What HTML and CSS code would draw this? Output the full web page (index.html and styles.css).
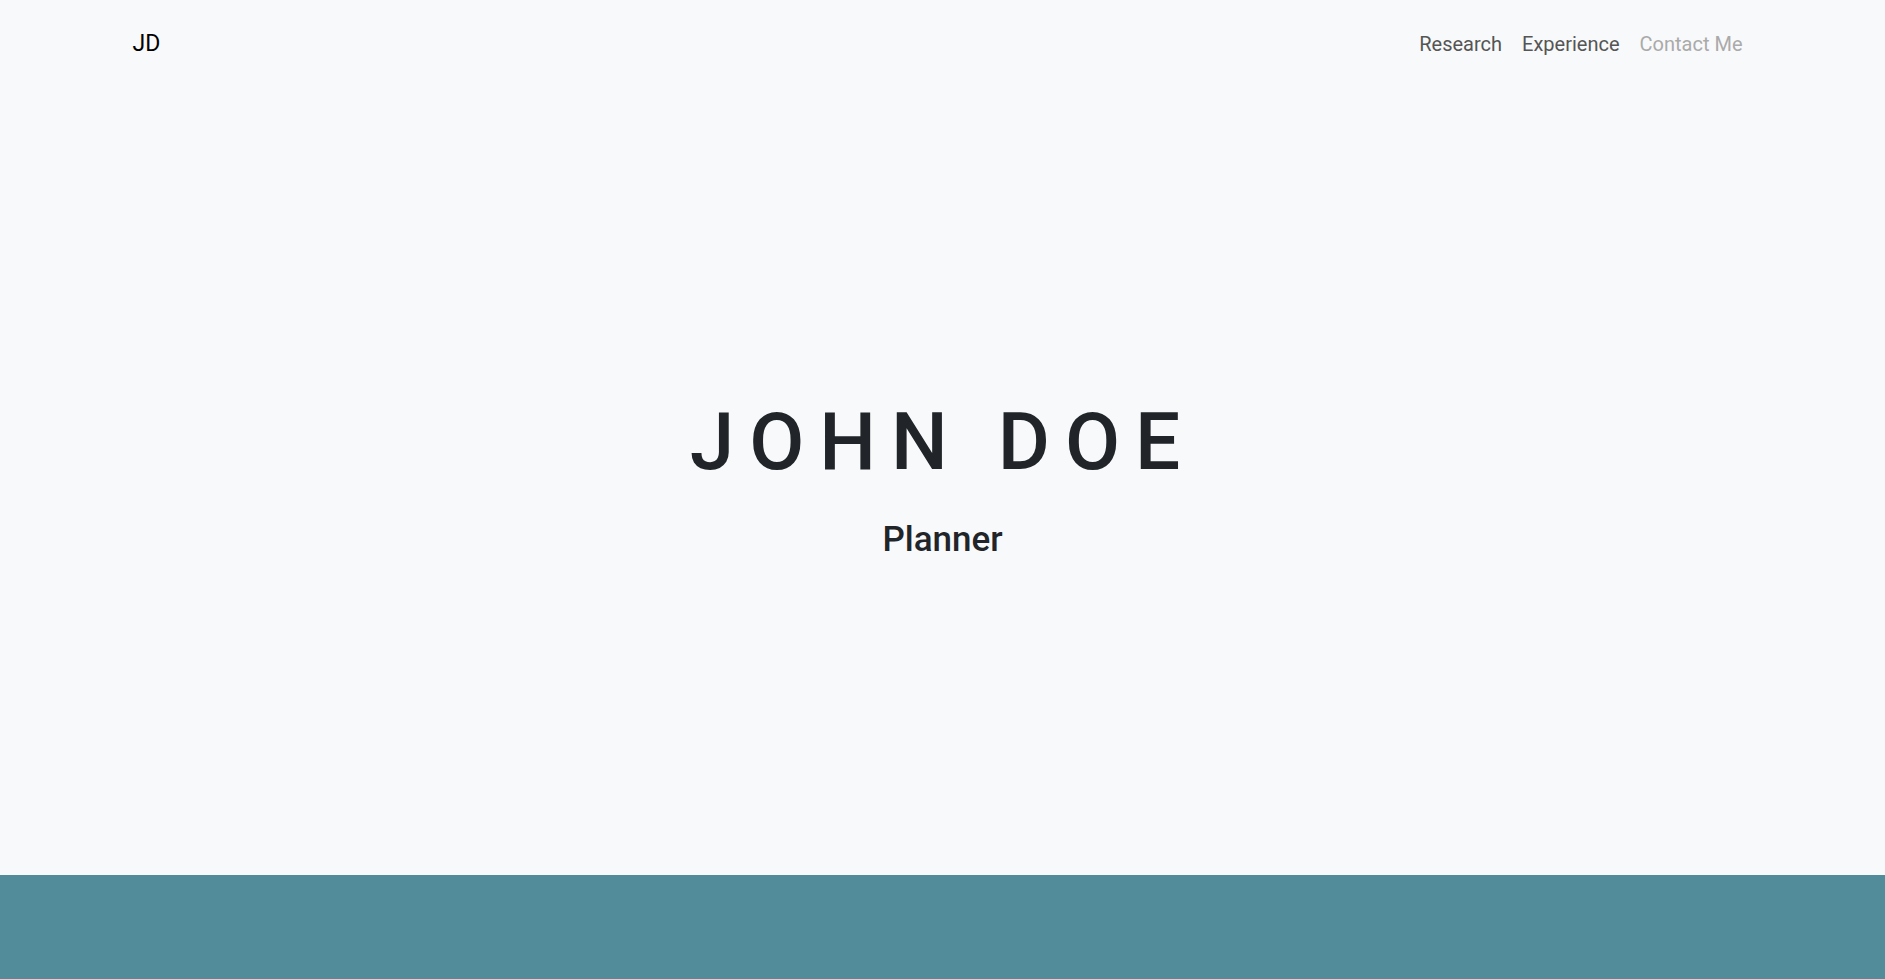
FILE: index.html
```html
<!DOCTYPE html>
<html lang="en">
<head>
  <meta charset="UTF-8">
  <meta name="viewport" content="width=device-width, initial-scale=1.0">
  <title>John Doe</title>
  <link rel="stylesheet" href="styles.css">
</head>
<body>

  <header class="navbar">
    <div class="container nav-inner">
      <a class="brand" href="#">JD</a>
      <nav class="nav-links">
        <a class="nav-link" href="#research">Research</a>
        <a class="nav-link" href="#experience">Experience</a>
        <a class="nav-link muted" href="#contact">Contact Me</a>
      </nav>
    </div>
  </header>

  <section class="hero">
    <h1 class="hero-name">JOHN DOE</h1>
    <h2 class="hero-role">Planner</h2>
  </section>

  <section class="band" id="research"></section>

</body>
</html>
```

FILE: styles.css
```css
body {
  font-family: Roboto, "Noto Sans", Arial, sans-serif;
  background-color: #f8f9fa;
  color: #212529;
  margin: 0;
  padding: 0;
}
a {
  text-decoration: none;
}
.container {
  width: 1620px;
  margin: 0 auto;
}
.navbar {
  height: 88px;
  display: flex;
  align-items: center;
}
.nav-inner {
  display: flex;
  justify-content: space-between;
  align-items: center;
}
.brand {
  font-size: 23px;
  line-height: 1.5;
  color: #000;
}
.nav-links {
  display: flex;
}
.nav-link {
  font-size: 20px;
  line-height: 1.5;
  padding: 0 10px;
  color: #555;
}
.nav-link.muted {
  color: #aaa;
}
.hero {
  height: 787px;
  box-sizing: border-box;
  padding-bottom: 8px;
  display: flex;
  flex-direction: column;
  justify-content: center;
  align-items: center;
  text-align: center;
}
.hero-name {
  margin: 0;
  font-size: 80px;
  font-weight: 500;
  line-height: 1.2;
  letter-spacing: 15px;
}
.hero-role {
  margin: 29px 0 0;
  font-size: 35px;
  font-weight: 500;
  line-height: 1.2;
}
.band {
  background-color: #528c9b;
  height: 104px;
}
```
